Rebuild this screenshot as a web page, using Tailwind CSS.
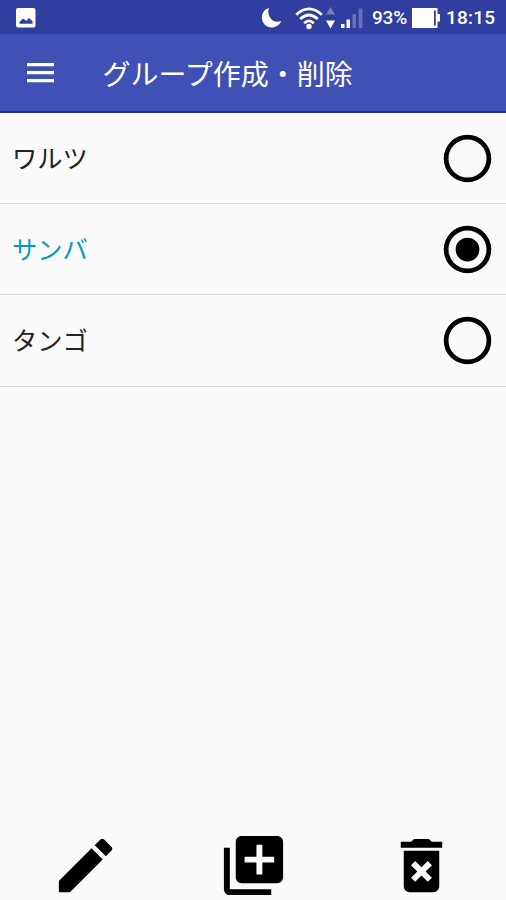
<!DOCTYPE html>
<html lang="ja">
<head>
<meta charset="utf-8">
<title>グループ作成・削除</title>
<script src="https://cdn.jsdelivr.net/npm/@tailwindcss/browser@4"></script>
</head>
<body class="flex h-[900px] w-[506px] flex-col overflow-hidden bg-[#fafafa] font-['Noto_Sans_CJK_JP',sans-serif]">
<div class="flex h-[34px] shrink-0 items-center bg-[#303f9f] pt-[1px] pl-4 pr-[10px] font-[Roboto,sans-serif] text-white">
  <svg class="h-5 w-5" viewBox="0 0 20 20"><path fill="#fff" fill-rule="evenodd" d="M2 0h15.500a2 2 0 0 1 2 2v15.500a2 2 0 0 1-2 2H2a2 2 0 0 1-2-2V2a2 2 0 0 1 2-2zM3.500 15.700h13v-2.500L13 10l-2.500 3L7 10.500l-3.500 3.500z"/></svg>
  <svg class="ml-auto h-[22px] w-[22px]" viewBox="0 0 22 22"><path fill="#fff" d="M8 1C3 2.500 0.500 6.500 1 11.500c.5 5.500 4.500 9 9.500 9 4.500 0 8-2.500 9.700-6.500-4 1.500-8 .7-10.300-2.200C7.300 8.500 6.500 4.500 8 1z"/></svg>
  <svg class="ml-3 h-6 w-7" viewBox="0 0 28 24" fill="none" stroke="#fff" stroke-width="2.800"><path d="M1.200 8.800Q14-3 26.800 8.800M5.200 13.100Q14 4.800 22.800 13.100M9.200 17.200Q14 12.400 18.800 17.200"/><circle cx="14" cy="20.500" r="2.700" fill="#fff" stroke="none"/></svg>
  <svg class="ml-[3px] h-6 w-[9px]" viewBox="0 0 9 24"><path fill="#7580c2" d="M4.500 1L9 8.500H0z"/><path fill="#fff" d="M4.500 22.500L0 14.500h9z"/></svg>
  <svg class="ml-[6px] h-6 w-[22px]" viewBox="0 0 22 24"><path fill="#fff" d="M0 18h3.500v4H0zM5.500 13.500H9V22H5.500z"/><path fill="#6571ba" d="M11.500 8H15v14h-3.500zM17.700 2.500h3.700V22h-3.700z"/></svg>
  <span class="ml-[9px] w-[39px] whitespace-nowrap text-[19px] font-medium leading-none tracking-[-0.200px]">93%</span>
  <svg class="ml-[1px] h-5 w-[29px]" viewBox="0 0 29 20"><path fill="#fff" d="M0 0h25.500v6H28v7.500h-2.500V20H0z"/><path fill="#303f9f" d="M22 2.500h1.800v15H22z"/></svg>
  <span class="ml-[5px] w-[50px] whitespace-nowrap text-[19px] font-medium leading-none tracking-[0.200px]">18:15</span>
</div>
<header class="flex h-[79px] shrink-0 items-center border-b-2 border-[#2330a0] bg-[#3f51b5] pt-[1px] pl-[26.500px]">
  <svg class="h-5 w-[27px]" viewBox="0 0 27 20"><path fill="#fff" d="M0 0h27v3.300H0zM0 8h27v3.300H0zM0 16h27v3.300H0z"/></svg>
  <h1 class="ml-[49px] whitespace-nowrap text-[28px] leading-none text-white">グループ作成・削除</h1>
</header>
<ul class="shrink-0 text-[25.300px] leading-none text-[#222]">
  <li class="flex h-[91px] items-center justify-between border-b border-[#d9d9d9] pl-3 pr-[10px]"><span class="pb-[1px]">ワルツ</span><svg class="h-[57px] w-[57px]" viewBox="0 0 24 24"><circle cx="12" cy="12" r="9" fill="none" stroke="#000" stroke-width="2"/></svg></li>
  <li class="flex h-[91px] items-center justify-between border-b border-[#d9d9d9] pl-3 pr-[10px]"><span class="pb-[1px] text-[#0799c4]">サンバ</span><svg class="h-[57px] w-[57px]" viewBox="0 0 24 24"><circle cx="12" cy="12" r="9" fill="none" stroke="#000" stroke-width="2"/><circle cx="12" cy="12" r="5"/></svg></li>
  <li class="flex h-[92px] items-center justify-between border-b border-[#d9d9d9] pl-3 pr-[10px]"><span class="pb-[2px]">タンゴ</span><svg class="h-[57px] w-[57px]" viewBox="0 0 24 24"><circle cx="12" cy="12" r="9" fill="none" stroke="#000" stroke-width="2"/></svg></li>
</ul>
<nav class="mt-auto grid h-[70px] shrink-0 grid-cols-3 justify-items-center pl-px">
  <svg class="h-[71px] w-[71px]" viewBox="0 0 24 24"><path d="M3 17.250V21h3.750L17.810 9.940l-3.750-3.750L3 17.250zM20.710 7.040a1 1 0 0 0 0-1.410l-2.340-2.340a1 1 0 0 0-1.410 0l-1.830 1.830 3.750 3.750 1.830-1.830z"/></svg>
  <svg class="h-[71px] w-[71px]" viewBox="0 0 24 24"><path d="M4 6H2v14c0 1.100.9 2 2 2h14v-2H4V6zm16-4H8c-1.100 0-2 .9-2 2v12c0 1.100.9 2 2 2h12c1.100 0 2-.9 2-2V4c0-1.100-.9-2-2-2zm-1 9h-4v4h-2v-4H9V9h4V5h2v4h4v2z"/></svg>
  <svg class="h-[71px] w-[71px]" viewBox="0 0 24 24"><path d="M6 19c0 1.100.9 2 2 2h8c1.100 0 2-.9 2-2V7H6v12zm2.460-7.120l1.410-1.410L12 12.590l2.120-2.120 1.410 1.410L13.410 14l2.120 2.120-1.410 1.410L12 15.410l-2.120 2.120-1.410-1.410L10.590 14l-2.130-2.120zM15.500 4l-1-1h-5l-1 1H5v2h14V4z"/></svg>
</nav>
</body>
</html>
